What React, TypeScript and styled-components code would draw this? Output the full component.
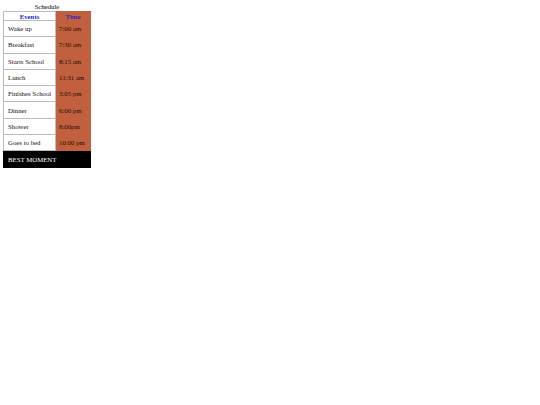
import React from "react";
import styled, { createGlobalStyle } from "styled-components";

const GlobalStyle = createGlobalStyle`
  body {
    margin: 3px;
    background: #fff;
    font-family: "Liberation Serif", "Times New Roman", serif;
    font-size: 6.7px;
    color: #000;
  }
`;

const Table = styled.table`
  border-collapse: collapse;
  table-layout: fixed;
  width: 87px;
`;

const Caption = styled.caption`
  font-size: 6.7px;
  line-height: 8px;
  height: 8px;
`;

const Col = styled.col<{ $w: number }>`
  width: ${(p) => p.$w}px;
`;

const HeadCell = styled.th<{ $time?: boolean }>`
  height: 8px;
  padding: 0;
  font-size: 6.8px;
  line-height: 7px;
  font-weight: bold;
  color: ${(p) => (p.$time ? "#3b1fc4" : "#2a1fcc")};
  background: ${(p) => (p.$time ? "#c1603f" : "#fff")};
  border: 1px solid ${(p) => (p.$time ? "#c1603f" : "#bcbcbc")};
  text-align: center;
`;

const Cell = styled.td<{ $time?: boolean }>`
  height: 15.3px;
  padding: 0 0 0 ${(p) => (p.$time ? "3px" : "4px")};
  font-size: 6.8px;
  line-height: 7px;
  white-space: nowrap;
  overflow: hidden;
  background: ${(p) => (p.$time ? "#c1603f" : "#fff")};
  color: ${(p) => (p.$time ? "#2a0a00" : "#111")};
  border-top: 1px solid ${(p) => (p.$time ? "#c1603f" : "#bcbcbc")};
  border-bottom: 1px solid ${(p) => (p.$time ? "#c1603f" : "#bcbcbc")};
  border-left: 1px solid #bcbcbc;
  border-right: 1px solid ${(p) => (p.$time ? "#c1603f" : "#bcbcbc")};
`;

const FootCell = styled.td`
  height: 15.3px;
  padding: 0 0 0 4px;
  background: #000;
  color: #fff;
  font-size: 6.8px;
  border: 1px solid #000;
`;

const rows: [string, string][] = [
  ["Wake up", "7:00 am"],
  ["Breakfast", "7:30 am"],
  ["Starts School", "8:15 am"],
  ["Lunch", "11:31 am"],
  ["Finishes School", "3:05 pm"],
  ["Dinner", "6:00 pm"],
  ["Shower", "8:00pm"],
  ["Goes to bed", "10:00 pm"],
];

export default function App() {
  return (
    <>
      <GlobalStyle />
      <Table>
        <Caption>Schedule</Caption>
        <colgroup>
          <Col $w={52} />
          <Col $w={35} />
        </colgroup>
        <thead>
          <tr>
            <HeadCell>Events</HeadCell>
            <HeadCell $time>Time</HeadCell>
          </tr>
        </thead>
        <tbody>
          {rows.map(([event, time]) => (
            <tr key={event}>
              <Cell>{event}</Cell>
              <Cell $time>{time}</Cell>
            </tr>
          ))}
          <tr>
            <FootCell colSpan={2}>BEST MOMENT</FootCell>
          </tr>
        </tbody>
      </Table>
    </>
  );
}
